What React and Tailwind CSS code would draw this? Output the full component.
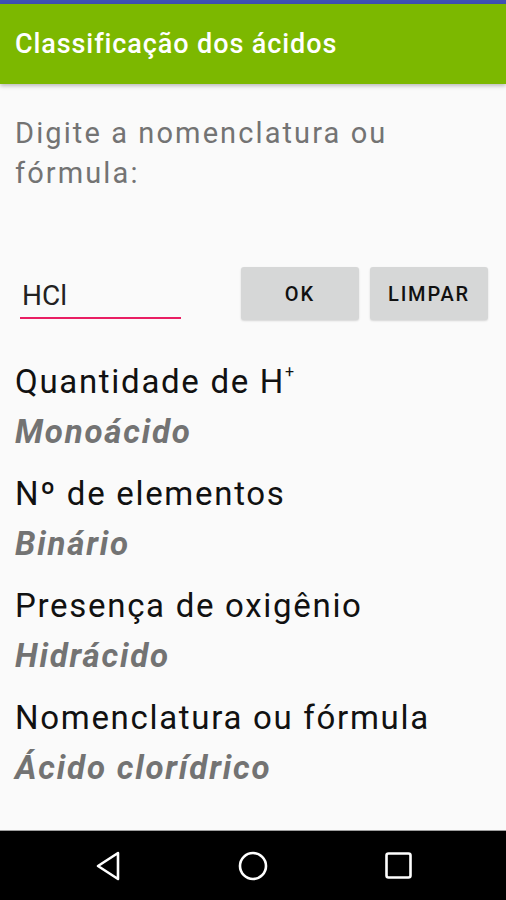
export default function App() {
  const items = [
    { label: <>Quantidade de H<sup className="text-[16px] relative -top-[4px] align-super leading-none tracking-normal">+</sup></>, value: "Monoácido" },
    { label: "Nº de elementos", value: "Binário" },
    { label: "Presença de oxigênio", value: "Hidrácido" },
    { label: "Nomenclatura ou fórmula", value: "Ácido clorídrico" },
  ];
  return (
    <div className="w-[506px] h-[900px] flex flex-col bg-[#fafafa] overflow-hidden" style={{ fontFamily: "Roboto, 'Noto Sans', sans-serif" }}>
      <div className="h-[4px] bg-[#3f51b5]" />
      <div className="h-[80px] bg-[#7cb800] flex items-center px-[15px] shadow-[0_2px_4px_rgba(0,0,0,0.25)] relative z-10">
        <span className="text-white text-[27px] font-medium leading-none tracking-[0.9px]">Classificação dos ácidos</span>
      </div>
      <div className="flex-1 flex flex-col px-[15px]">
        <div className="mt-[29px] text-[29px] leading-[40px] text-[#737373] tracking-[2.1px]">
          Digite a nomenclatura ou<br />fórmula:
        </div>
        <div className="mt-[74px] flex items-start">
          <div className="w-[161px] ml-[5px] mt-[14px] flex flex-col">
            <div className="text-[28px] leading-[30px] text-[#222] pl-[2px]">HCl</div>
            <div className="mt-[6px] h-[2px] bg-[#e91e63]" />
          </div>
          <button className="ml-[60px] w-[118px] h-[53px] bg-[#d6d7d7] rounded-[3px] shadow-[0_1px_2px_rgba(0,0,0,0.15)] text-[20px] font-medium text-[#111] tracking-[2px]">OK</button>
          <button className="ml-[11px] w-[118px] h-[53px] bg-[#d6d7d7] rounded-[3px] shadow-[0_1px_2px_rgba(0,0,0,0.15)] text-[20px] font-medium text-[#111] tracking-[1.8px]">LIMPAR</button>
        </div>
        <div className="mt-[37px] flex flex-col gap-[12px]">
          {items.map((it, i) => (
            <div key={i} className="flex flex-col">
              <div className="text-[33px] leading-[50px] text-[#111] tracking-[1.7px]">{it.label}</div>
              <div className="text-[33px] leading-[50px] font-bold italic text-[#737373] tracking-[1.8px]">{it.value}</div>
            </div>
          ))}
        </div>
      </div>
      <div className="h-[1px] bg-[#9e9e9e]" />
      <div className="h-[69px] bg-black flex items-center justify-center">
        <div className="w-[145px] flex justify-center">
          <svg width="26" height="30" viewBox="0 0 26 30">
            <path d="M23 2 L3 15 L23 28 Z" fill="none" stroke="white" strokeWidth="2.6" strokeLinejoin="round" />
          </svg>
        </div>
        <div className="w-[145px] flex justify-center">
          <svg width="30" height="30" viewBox="0 0 30 30">
            <circle cx="15" cy="15" r="13" fill="none" stroke="white" strokeWidth="2.6" />
          </svg>
        </div>
        <div className="w-[145px] flex justify-center">
          <svg width="27" height="27" viewBox="0 0 27 27">
            <rect x="1.5" y="1.5" width="24" height="24" rx="2" fill="none" stroke="white" strokeWidth="2.6" />
          </svg>
        </div>
      </div>
    </div>
  );
}
